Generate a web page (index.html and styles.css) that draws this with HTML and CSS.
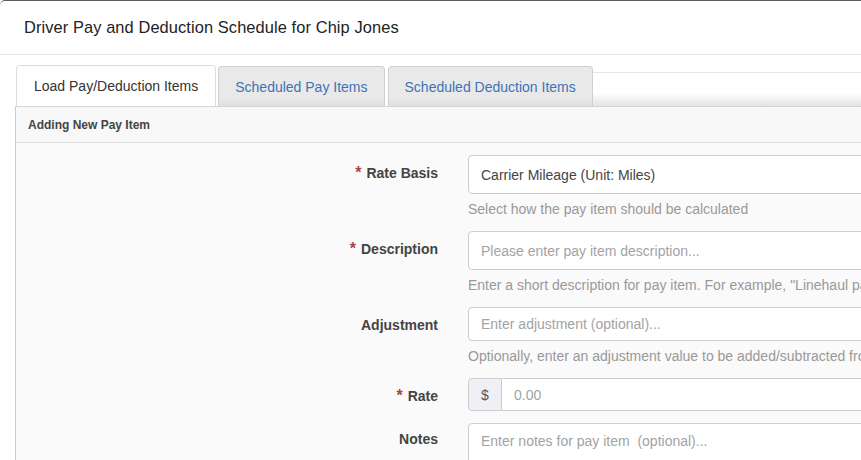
FILE: index.html
```html
<!DOCTYPE html>
<html lang="en">
<head>
  <meta charset="UTF-8" />
  <meta name="viewport" content="width=device-width, initial-scale=1.0" />
  <title>Driver Pay and Deduction Schedule</title>
  <link rel="stylesheet" href="styles.css">
</head>
<body>
  <div class="modal">
    <div class="modal-header">
      <h4>Driver Pay and Deduction Schedule for Chip Jones</h4>
    </div>

    <div class="modal-body">
      <ul class="tabs">
        <li class="tab active">Load Pay/Deduction Items</li>
        <li class="tab">Scheduled Pay Items</li>
        <li class="tab">Scheduled Deduction Items</li>
        <li class="tab-filler"></li>
      </ul>

      <div class="panel">
        <div class="panel-heading">Adding New Pay Item</div>
        <div class="panel-body">
          <div class="form-group">
            <label class="control-label"><span class="req">*</span> Rate Basis</label>
            <div class="field">
              <div class="form-control select tall">Carrier Mileage (Unit: Miles)</div>
              <p class="help">Select how the pay item should be calculated</p>
            </div>
          </div>

          <div class="form-group">
            <label class="control-label"><span class="req">*</span> Description</label>
            <div class="field">
              <input class="form-control tall" type="text" placeholder="Please enter pay item description..." />
              <p class="help">Enter a short description for pay item. For example, "Linehaul pay" or "Fuel surcharge"</p>
            </div>
          </div>

          <div class="form-group">
            <label class="control-label">Adjustment</label>
            <div class="field">
              <input class="form-control mid" type="text" placeholder="Enter adjustment (optional)..." />
              <p class="help">Optionally, enter an adjustment value to be added/subtracted from the calculated amount</p>
            </div>
          </div>

          <div class="form-group">
            <label class="control-label"><span class="req">*</span> Rate</label>
            <div class="field">
              <div class="input-group">
                <span class="addon">$</span>
                <input class="form-control short" type="text" placeholder="0.00" />
              </div>
            </div>
          </div>

          <div class="form-group">
            <label class="control-label notes-label">Notes</label>
            <div class="field">
              <textarea class="form-control notes" placeholder="Enter notes for pay item  (optional)..."></textarea>
            </div>
          </div>
        </div>
      </div>
    </div>
  </div>
</body>
</html>
```

FILE: styles.css
```css
* {
  margin: 0;
  padding: 0;
  box-sizing: border-box;
}
html, body {
  height: 100%;
  overflow: hidden;
}
body {
  background: #fff;
  font-family: "Liberation Sans", Arial, sans-serif;
  font-size: 14px;
  color: #333;
}
.modal {
  border-top: 1px solid #5c5c5c;
  border-top-left-radius: 5px;
  min-height: 100%;
}
.modal-header {
  height: 54px;
  padding: 0 24px;
  display: flex;
  align-items: center;
  border-bottom: 1px solid #e5e5e5;
}
.modal-header h4 {
  font-size: 16.4px;
  font-weight: normal;
  color: #222;
  letter-spacing: 0.1px;
}
.modal-body {
  padding-top: 10px;
  padding-left: 15px;
}
.tabs {
  list-style: none;
  display: flex;
  align-items: stretch;
  padding-left: 1px;
}
.tab {
  height: 40px;
  padding: 0 16px;
  margin-right: 3px;
  display: flex;
  align-items: center;
  border: 1px solid #cfcfcf;
  border-bottom: none;
  border-radius: 4px 4px 0 0;
  background: linear-gradient(to bottom, #e9e9e9 80%, #dedede 100%);
  color: #3d74b5;
  margin-top: 1px;
}
.tab.active {
  background: #fff;
  color: #333;
  border-color: #dcdcdc;
  margin-top: 0;
  height: 41px;
  margin-right: 2px;
  padding: 0 17px;
}
.tab-filler {
  flex: 1;
  margin-top: 7px;
  margin-left: -3px;
  border-top: 1px solid #e6e6e6;
  background: linear-gradient(to bottom, #fff 60%, #e3e3e3 100%);
}
.panel {
  border-left: 1px solid #cccccc;
  border-top: 1px solid #d6d6d6;
  background: #fafafa;
}
.panel-heading {
  height: 36px;
  padding: 0 12px;
  display: flex;
  align-items: center;
  font-size: 12px;
  font-weight: bold;
  color: #444;
  background: #f8f8f8;
  border-bottom: 1px solid #dedede;
}
.panel-body {
  padding-top: 12px;
}
.form-group {
  display: grid;
  grid-template-columns: 422px 620px;
  column-gap: 30px;
  margin-bottom: 12px;
}
.control-label {
  text-align: right;
  padding-top: 8px;
  line-height: 20px;
  font-weight: bold;
  color: #444;
}
.notes-label {
  padding-top: 6px;
}
.req {
  color: #a94442;
  font-size: 16px;
  margin-right: 1px;
}
.form-control {
  display: block;
  width: 100%;
  height: 34px;
  padding: 0 12px;
  border: 1px solid #cccccc;
  border-radius: 4px;
  background: #fff;
  font-family: inherit;
  font-size: 14px;
  color: #444;
  outline: none;
}
.form-control::placeholder {
  color: #a3a3a3;
}
.form-control.tall {
  height: 39px;
}
.form-control.mid {
  height: 34px;
}
.form-control.short {
  height: 33px;
  border-radius: 0 4px 4px 0;
  border-left: none;
}
.select {
  display: flex;
  align-items: center;
}
.help {
  margin-top: 5px;
  line-height: 20px;
  color: #999;
  white-space: nowrap;
}
.input-group {
  display: flex;
}
.addon {
  width: 34px;
  height: 33px;
  flex: none;
  display: flex;
  align-items: center;
  justify-content: center;
  background: #f0eff5;
  border: 1px solid #cccccc;
  border-radius: 4px 0 0 4px;
  color: #555;
}
.notes {
  height: 70px;
  padding-top: 7px;
  resize: none;
  line-height: 20px;
}
```
